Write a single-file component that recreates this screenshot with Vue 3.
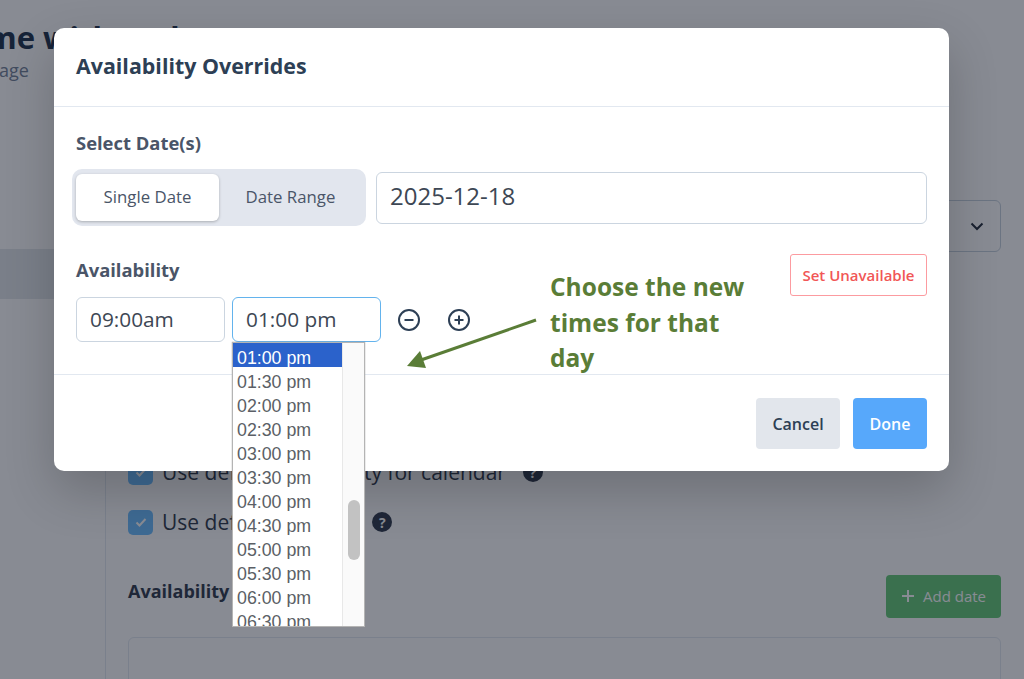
<script setup>
const times = [
  '01:00 pm', '01:30 pm', '02:00 pm', '02:30 pm', '03:00 pm', '03:30 pm',
  '04:00 pm', '04:30 pm', '05:00 pm', '05:30 pm', '06:00 pm', '06:30 pm',
]
</script>

<template>
  <div class="page">
    <!-- page behind the dialog -->
    <div class="bg">
      <div class="bg-head">
        <h1>Some with and</h1>
        <p>Your page</p>
      </div>
      <div class="bg-body">
        <aside class="side">
          <div class="side-row"></div>
        </aside>
        <main class="main">
          <div class="select-line">
            <div class="fake-select">
              <svg width="16" height="16" viewBox="0 0 16 16" fill="none" stroke="#1f2937" stroke-width="2">
                <path d="M2.500 5.500 8 11l5.500-5.500" />
              </svg>
            </div>
          </div>
          <div class="check-row first">
            <span class="check"><svg width="14" height="14" viewBox="0 0 14 14" fill="none" stroke="#fff" stroke-width="2"><path d="M2.500 7.500 5.500 10.500 11.500 4" /></svg></span>
            <span>Use default availability for calendar</span>
            <span class="help">?</span>
          </div>
          <div class="check-row">
            <span class="check"><svg width="14" height="14" viewBox="0 0 14 14" fill="none" stroke="#fff" stroke-width="2"><path d="M2.500 7.500 5.500 10.500 11.500 4" /></svg></span>
            <span>Use default settings</span>
            <span class="help">?</span>
          </div>
          <div class="avail-line">
            <strong>Availability Overrides</strong>
            <button class="add-date">
              <svg width="14" height="14" viewBox="0 0 14 14" fill="none" stroke="#fff" stroke-width="2"><path d="M7 1v12M1 7h12" /></svg>
              Add date
            </button>
          </div>
          <div class="empty-card"></div>
        </main>
      </div>
    </div>

    <div class="overlay"></div>

    <!-- dialog -->
    <section class="modal">
      <header class="modal-head">
        <h2>Availability Overrides</h2>
      </header>
      <div class="modal-body">
        <label class="lbl">Select Date(s)</label>
        <div class="date-row">
          <div class="segment">
            <button class="seg-btn active">Single Date</button>
            <button class="seg-btn">Date Range</button>
          </div>
          <div class="field date-field">2025-12-18</div>
        </div>
        <div class="avail-block">
          <div class="avail-left">
            <label class="lbl">Availability</label>
            <div class="time-row">
              <div class="field time">09:00am</div>
              <div class="field time focus">01:00 pm</div>
              <svg class="round" width="24" height="24" viewBox="0 0 24 24" fill="none" stroke="#2d3f55" stroke-width="2">
                <circle cx="12" cy="12" r="10" />
                <path d="M7.500 12h9" />
              </svg>
              <svg class="round" width="24" height="24" viewBox="0 0 24 24" fill="none" stroke="#2d3f55" stroke-width="2">
                <circle cx="12" cy="12" r="10" />
                <path d="M7.500 12h9M12 7.500v9" />
              </svg>
            </div>
          </div>
          <button class="unavail">Set Unavailable</button>
        </div>
      </div>
      <footer class="modal-foot">
        <button class="btn cancel">Cancel</button>
        <button class="btn done">Done</button>
      </footer>
    </section>

    <!-- open time dropdown -->
    <div class="listbox">
      <div class="options">
        <div v-for="(t, i) in times" :key="t" class="opt" :class="{ sel: i === 0 }">{{ t }}</div>
      </div>
      <div class="track"><div class="thumb"></div></div>
    </div>

    <!-- annotation -->
    <div class="note">Choose the new times for that day</div>
    <svg class="arrow" width="140" height="60" viewBox="0 0 140 60" fill="none">
      <path d="M133 4 18 44" stroke="#5a7d37" stroke-width="3" />
      <path d="M4 50 17 35 23 52Z" fill="#5a7d37" />
    </svg>
  </div>
</template>

<style scoped>
.page {
  position: relative;
  width: 1024px;
  height: 679px;
  overflow: hidden;
  background: #fff;
  font-family: "Open Sans", "Noto Sans", sans-serif;
  color: #2d3748;
}

.bg-head {
  height: 89px;
  margin-left: -50px;
  padding-top: 17px;
  box-sizing: border-box;
}
.bg-head h1 {
  margin: 0;
  font-size: 31px;
  line-height: 40px;
  font-weight: 700;
  color: #1a2f48;
  white-space: nowrap;
}
.bg-head p {
  margin: 1px 0 0 -6px;
  font-size: 18px;
  line-height: 24px;
  color: #718096;
  white-space: nowrap;
}

.bg-body {
  display: flex;
  height: 590px;
}
.side {
  width: 105px;
  border-right: 1px solid #e2e8f0;
  padding-top: 160px;
  box-sizing: content-box;
}
.side-row {
  height: 50px;
  background: #e2e6ea;
}
.main {
  flex: 1;
  padding: 0 23px 0 22px;
}
.select-line {
  display: flex;
  justify-content: flex-end;
  padding-top: 111px;
}
.fake-select {
  width: 300px;
  height: 52px;
  border: 1.500px solid #c5d0dc;
  border-radius: 6px;
  box-sizing: border-box;
  display: flex;
  align-items: center;
  justify-content: flex-end;
  padding-right: 15px;
}
.check-row {
  display: flex;
  align-items: center;
  gap: 9px;
  font-size: 21px;
  color: #2d3748;
  margin-top: 24px;
  height: 26px;
}
.check-row.first {
  margin-top: 207px;
}
.check {
  width: 25px;
  height: 25px;
  border-radius: 5px;
  background: #6bbcff;
  display: flex;
  align-items: center;
  justify-content: center;
}
.help {
  width: 20px;
  height: 20px;
  margin-left: 8px;
  border-radius: 50%;
  background: #2d3748;
  color: #fff;
  font-size: 14px;
  font-weight: 700;
  display: flex;
  align-items: center;
  justify-content: center;
}
.avail-line {
  display: flex;
  justify-content: space-between;
  align-items: center;
  margin-top: 39px;
  height: 44px;
  font-size: 18px;
  color: #2d3748;
}
.avail-line strong {
  padding-bottom: 10px;
}
.add-date {
  width: 115px;
  height: 43px;
  border: 0;
  border-radius: 4px;
  background: #62c874;
  color: #fff;
  font: 500 15px "Open Sans", sans-serif;
  display: flex;
  align-items: center;
  justify-content: center;
  gap: 8px;
}
.empty-card {
  margin-top: 19px;
  height: 120px;
  border: 1px solid #e2e8f0;
  border-radius: 6px;
}

.overlay {
  position: absolute;
  inset: 0;
  background: rgba(17, 24, 39, 0.5);
}

.modal {
  position: absolute;
  left: 54px;
  top: 28px;
  width: 895px;
  height: 443px;
  background: #fff;
  border-radius: 10px;
  box-shadow: 0 20px 50px rgba(0, 0, 0, 0.2);
  display: flex;
  flex-direction: column;
}
.modal-head {
  height: 79px;
  box-sizing: border-box;
  padding: 22px 22px 0;
  border-bottom: 1px solid #e2e8f0;
}
.modal-head h2 {
  margin: 0;
  font-size: 21.400px;
  line-height: 32px;
  font-weight: 700;
  color: #2d3f55;
}
.modal-body {
  flex: 1;
  padding: 24px 22px 0;
  position: relative;
  min-height: 0;
}
.lbl {
  display: block;
  font-size: 18.400px;
  line-height: 24px;
  font-weight: 700;
  color: #4a5568;
}
.date-row {
  display: flex;
  align-items: center;
  gap: 10px;
  margin-top: 14px;
  margin-left: -4px;
}
.segment {
  width: 294px;
  height: 57px;
  box-sizing: border-box;
  padding: 5px 4px;
  border-radius: 10px;
  background: #e2e6ee;
  display: flex;
}
.seg-btn {
  flex: 1;
  border: 0;
  padding: 0 6px 2px;
  background: transparent;
  font: 500 16.800px "Open Sans", sans-serif;
  color: #4a5568;
  border-radius: 6px;
}
.seg-btn.active {
  flex: 0 0 143px;
  background: #fff;
  box-shadow: 0 1px 3px rgba(0, 0, 0, 0.25);
}
.field {
  box-sizing: border-box;
  background: #fff;
  border: 1.500px solid #cbd5e0;
  border-radius: 6px;
  color: #3d4754;
  display: flex;
  align-items: center;
}
.date-field {
  flex: 1;
  height: 52px;
  padding: 0 0 5px 13px;
  font-size: 24px;
}
.avail-block {
  display: flex;
  justify-content: space-between;
  align-items: flex-start;
  margin-top: 28px;
}
.avail-left .lbl {
  margin-top: 4px;
}
.time-row {
  display: flex;
  align-items: center;
  margin-top: 15px;
}
.time {
  width: 149px;
  height: 45px;
  padding: 0 0 1px 13px;
  font-size: 20.800px;
  margin-right: 7px;
}
.time.focus {
  border-color: #63b3ed;
}
.round {
  margin-left: 9px;
  margin-right: 17px;
}
.unavail {
  width: 137px;
  height: 42px;
  box-sizing: border-box;
  border: 1.500px solid #fc9ba0;
  border-radius: 3px;
  background: #fff;
  color: #f15656;
  font: 600 15px "Open Sans", sans-serif;
}
.modal-foot {
  height: 97px;
  box-sizing: border-box;
  border-top: 1px solid #e2e8f0;
  padding: 23px 22px 0;
  display: flex;
  justify-content: flex-end;
  gap: 13px;
}
.btn {
  height: 51px;
  border: 0;
  border-radius: 4px;
  font: 600 16px "Open Sans", sans-serif;
}
.cancel {
  width: 84px;
  background: #e2e6ec;
  color: #2d3f55;
}
.done {
  width: 74px;
  background: #57a8fb;
  color: #fff;
}

.listbox {
  position: absolute;
  left: 232px;
  top: 342px;
  width: 133px;
  height: 285px;
  box-sizing: border-box;
  border: 1px solid #b4b4b4;
  box-shadow: 0 0 1px #8f8f8f;
  background: #fff;
  display: flex;
  overflow: hidden;
}
.options {
  flex: 1;
}
.opt {
  height: 24px;
  padding-left: 4px;
  font: 17.800px/30px "Liberation Sans", Arial, sans-serif;
  color: #5b5f66;
  overflow: hidden;
}
.opt.sel {
  background: #2b62cb;
  color: #fff;
}
.track {
  width: 22px;
  background: #fafafa;
  border-left: 1px solid #e8e8e8;
  box-sizing: border-box;
  padding: 157px 4px 0 5px;
}
.thumb {
  height: 60px;
  border-radius: 6px;
  background: #c2c2c2;
}

.note {
  position: absolute;
  left: 550px;
  top: 269px;
  width: 210px;
  font-size: 24.500px;
  line-height: 35.500px;
  font-weight: 700;
  color: #5a7d37;
}
.arrow {
  position: absolute;
  left: 403px;
  top: 316px;
}
</style>

<style>
html, body {
  margin: 0;
}
</style>
